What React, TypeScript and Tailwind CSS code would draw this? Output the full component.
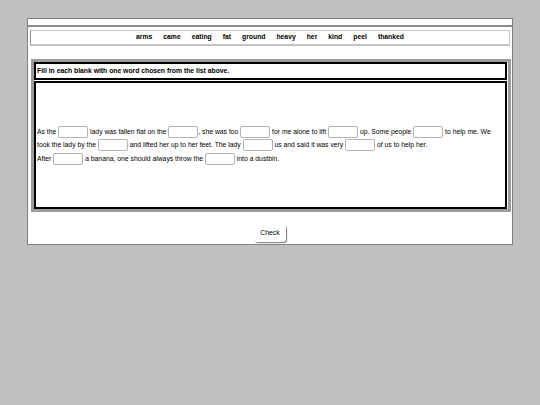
const words = ["arms", "came", "eating", "fat", "ground", "heavy", "her", "kind", "peel", "thanked"];

function Gap() {
    return (
        <input
            type="text"
            defaultValue=""
            className="inline-block h-[12px] w-[30px] rounded-[2px] border border-[#b4b4b4] bg-white align-middle outline-none"
        />
    );
}

export default function App() {
    return (
        <div className="min-h-[405px] w-[540px] bg-[#c0c0c0] pt-[18px] font-['Liberation_Sans',Arial,sans-serif] text-[6.8px] text-black antialiased">
            <div className="ml-[27px] flex h-[227px] w-[486px] flex-col border border-[#808080] bg-white">
                <div className="h-[8px] border-b-2 border-[#8a8a8a]" />

                <div className="mx-[2px] mt-[3px] flex h-[16px] items-center justify-center gap-[11px] border border-[#c4c4c4] border-l-[#8c8c8c] border-b-2 font-bold">
                    {words.map((w) => (
                        <span key={w}>{w}</span>
                    ))}
                </div>

                <div className="mt-[13px] ml-[3px] mr-[1px] flex flex-col gap-[1px] border-[3px] border-[#9c9c9c] bg-white pr-[1px]">
                    <div className="flex h-[18px] items-center border-2 border-black pl-[1px] font-bold">
                        Fill in each blank with one word chosen from the list above.
                    </div>
                    <div className="flex h-[128px] flex-col justify-center border-2 border-black pl-[1px] leading-[13.5px]">
                        <div className="whitespace-nowrap">
                            As the <Gap /> lady was fallen flat on the <Gap />, she was too <Gap /> for me alone to lift <Gap /> up. Some people <Gap /> to help me. We
                        </div>
                        <div className="whitespace-nowrap">
                            took the lady by the <Gap /> and lifted her up to her feet. The lady <Gap /> us and said it was very <Gap /> of us to help her.
                        </div>
                        <div className="whitespace-nowrap">
                            After <Gap /> a banana, one should always throw the <Gap /> into a dustbin.
                        </div>
                    </div>
                </div>

                <div className="mt-[13px] flex justify-center">
                    <button className="h-[17px] w-[32px] rounded-[3px] bg-white text-[6.8px] shadow-[1px_1px_1px_#777]">
                        Check
                    </button>
                </div>
            </div>
        </div>
    );
}
